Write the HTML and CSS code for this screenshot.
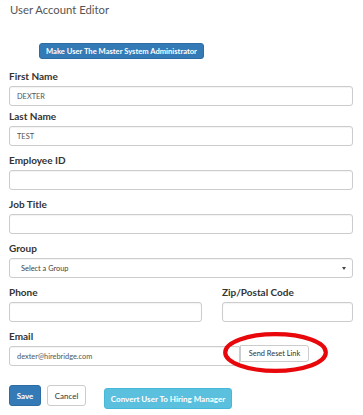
FILE: index.html
```html
<!DOCTYPE html>
<html>
<head>
<meta charset="utf-8">
<link rel="stylesheet" href="styles.css">
</head>
<body>
<div class="page">
  <h1 class="title">User Account Editor</h1>
  <div class="admin-row">
    <button class="btn btn-primary btn-xs">Make User The Master System Administrator</button>
  </div>
  <div class="field field-tight">
    <label class="label">First Name</label>
    <input class="input" value="DEXTER">
  </div>
  <div class="field">
    <label class="label">Last Name</label>
    <input class="input" value="TEST">
  </div>
  <div class="field">
    <label class="label">Employee ID</label>
    <input class="input" value="">
  </div>
  <div class="field">
    <label class="label">Job Title</label>
    <input class="input" value="">
  </div>
  <div class="field">
    <label class="label">Group</label>
    <div class="input select"><span>Select a Group</span><span class="caret"></span></div>
  </div>
  <div class="field two-col">
    <div>
      <label class="label">Phone</label>
      <input class="input" value="">
    </div>
    <div>
      <label class="label">Zip/Postal Code</label>
      <input class="input" value="">
    </div>
  </div>
  <div class="field">
    <label class="label">Email</label>
    <div class="email-row">
      <input class="input email-input" value="dexter@hirebridge.com">
      <button class="btn btn-default reset-btn">Send Reset Link</button>
      <svg class="ring" width="105" height="41" viewBox="0 0 105 41"><ellipse cx="52.5" cy="20.5" rx="50.3" ry="18.3" fill="none" stroke="#e8070b" stroke-width="4.2"/></svg>
    </div>
  </div>
  <div class="actions">
    <button class="btn btn-primary btn-sm">Save</button>
    <button class="btn btn-default btn-sm">Cancel</button>
    <button class="btn btn-info btn-sm convert">Convert User To Hiring Manager</button>
  </div>
</div>
</body>
</html>
```
FILE: styles.css
```css
* { box-sizing: border-box; }
body {
  margin: 0;
  background: #fff;
  font-family: Lato, "Open Sans", sans-serif;
  color: #333;
}
.page {
  padding: 2px 10px 0 9px;
}
.title {
  margin: 0 0 25px 1px;
  font-size: 11.3px;
  line-height: 16px;
  font-weight: 400;
  color: #555;
}
.admin-row {
  display: flex;
  padding-left: 30px;
  margin-bottom: 11px;
}
.btn {
  font-family: Lato, "Open Sans", sans-serif;
  border: 1px solid #ccc;
  border-radius: 3px;
  background: #fff;
  color: #333;
  padding: 0 6px;
  cursor: pointer;
}
.btn-primary {
  background: #337ab7;
  border-color: #2e6da4;
  color: #fff;
  font-weight: 700;
}
.btn-info {
  background: #5bc0de;
  border-color: #46b8da;
  color: #fff;
  font-weight: 700;
}
.btn-xs {
  height: 16px;
  font-size: 7.6px;
  padding: 0 5px;
  width: 165px;
}
.field {
  margin-bottom: 8px;
}
.field-tight {
  margin-bottom: 4px;
}
.label {
  display: block;
  font-size: 10px;
  line-height: 13px;
  font-weight: 700;
  color: #333;
  margin-bottom: 3px;
}
.input {
  display: block;
  width: 100%;
  height: 20px;
  border: 1px solid #ccc;
  border-radius: 3px;
  padding: 0 7px;
  font-family: Lato, "Open Sans", sans-serif;
  font-size: 7.4px;
  color: #555;
  background: #fff;
  box-shadow: inset 0 1px 1px rgba(0,0,0,0.05);
}
.select {
  display: flex;
  align-items: center;
  justify-content: space-between;
  padding: 0 6px 0 11px;
  color: #444;
}
.caret {
  width: 0;
  height: 0;
  border-left: 2px solid transparent;
  border-right: 2px solid transparent;
  border-top: 3px solid #444;
}
.two-col {
  display: grid;
  grid-template-columns: 193px 1fr;
  column-gap: 20px;
}
.email-row {
  position: relative;
  display: flex;
  align-items: flex-start;
}
.email-input {
  width: 231px;
  border-radius: 3px 0 0 3px;
}
.reset-btn {
  width: 69px;
  height: 17px;
  margin-top: -1px;
  font-size: 7.4px;
  padding: 0;
  border-radius: 0 3px 3px 0;
  color: #333;
}
.ring {
  position: absolute;
  left: 214px;
  top: -14px;
}
.actions {
  display: flex;
  align-items: flex-start;
  margin-top: 19px;
}
.btn-sm {
  height: 21px;
  font-size: 8px;
}
.actions .btn-primary {
  width: 32px;
  padding: 0;
}
.actions .btn-default {
  width: 39px;
  padding: 0;
  margin-left: 6px;
}
.convert {
  width: 128px;
  padding: 0;
  margin-left: 18px;
  margin-top: 3px;
}
```
